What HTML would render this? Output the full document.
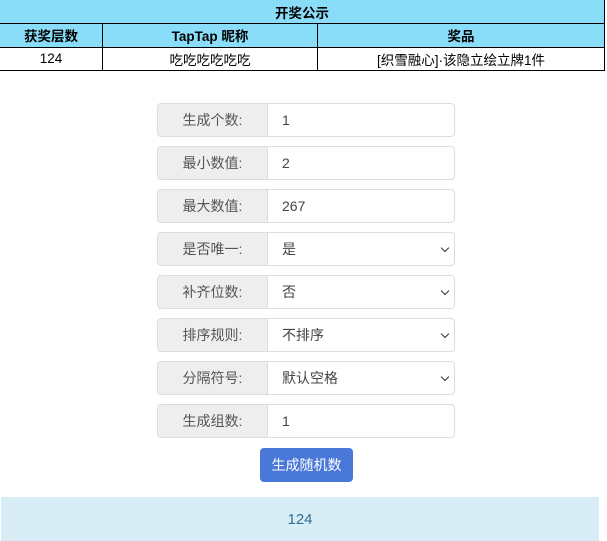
<!DOCTYPE html>
<html><head><meta charset="utf-8"><style>
body{margin:0;width:607px;height:541px;overflow:hidden;background:#fff;font-family:"Liberation Sans","Noto Sans CJK SC",sans-serif;position:relative}
table{position:absolute;left:0;top:0;width:605px;border-collapse:collapse;font-size:13.5px;color:#000}
td{border:1px solid #000;text-align:center;height:22.5px;padding:0}
.t{background:#8addf8;font-weight:bold;border-top:none;border-left:none;height:23px}
.h td{background:#8addf8;font-weight:bold}
.g{position:absolute;left:157px;width:298px;height:34px;border:1px solid #ddd;border-radius:4px;box-sizing:border-box;display:flex;font-size:14px;color:#555;overflow:hidden}
.l{width:109px;background:#eee;border-right:1px solid #ddd;display:flex;align-items:center;justify-content:center}
.v{flex:1;display:flex;align-items:center;padding-left:14px;position:relative;color:#444}
.s::after{content:"";position:absolute;right:6px;top:12px;width:5px;height:5px;border-right:1.5px solid #333;border-bottom:1.5px solid #333;transform:rotate(45deg)}
.btn{position:absolute;left:260px;top:448px;width:93px;height:34px;background:#4a78d8;border-radius:4px;color:#fff;font-size:14px;display:flex;align-items:center;justify-content:center}
.r{position:absolute;left:1px;top:497px;width:598px;height:44px;background:#d9edf7;color:#31708f;font-size:15px;display:flex;align-items:center;justify-content:center}
</style></head><body>
<table>
<tr><td colspan="3" class="t">开奖公示</td></tr>
<tr class="h"><td style="width:102px;border-left:none">获奖层数</td><td style="width:214px">TapTap 昵称</td><td>奖品</td></tr>
<tr><td style="border-left:none">124</td><td>吃吃吃吃吃吃</td><td>[织雪融心]·该隐立绘立牌1件</td></tr>
</table>
<div class="g" style="top:103px"><div class="l">生成个数:</div><div class="v">1</div></div>
<div class="g" style="top:146px"><div class="l">最小数值:</div><div class="v">2</div></div>
<div class="g" style="top:189px"><div class="l">最大数值:</div><div class="v">267</div></div>
<div class="g" style="top:232px"><div class="l">是否唯一:</div><div class="v s">是</div></div>
<div class="g" style="top:275px"><div class="l">补齐位数:</div><div class="v s">否</div></div>
<div class="g" style="top:318px"><div class="l">排序规则:</div><div class="v s">不排序</div></div>
<div class="g" style="top:361px"><div class="l">分隔符号:</div><div class="v s">默认空格</div></div>
<div class="g" style="top:404px"><div class="l">生成组数:</div><div class="v">1</div></div>
<div class="btn">生成随机数</div>
<div class="r">124</div>
</body></html>
